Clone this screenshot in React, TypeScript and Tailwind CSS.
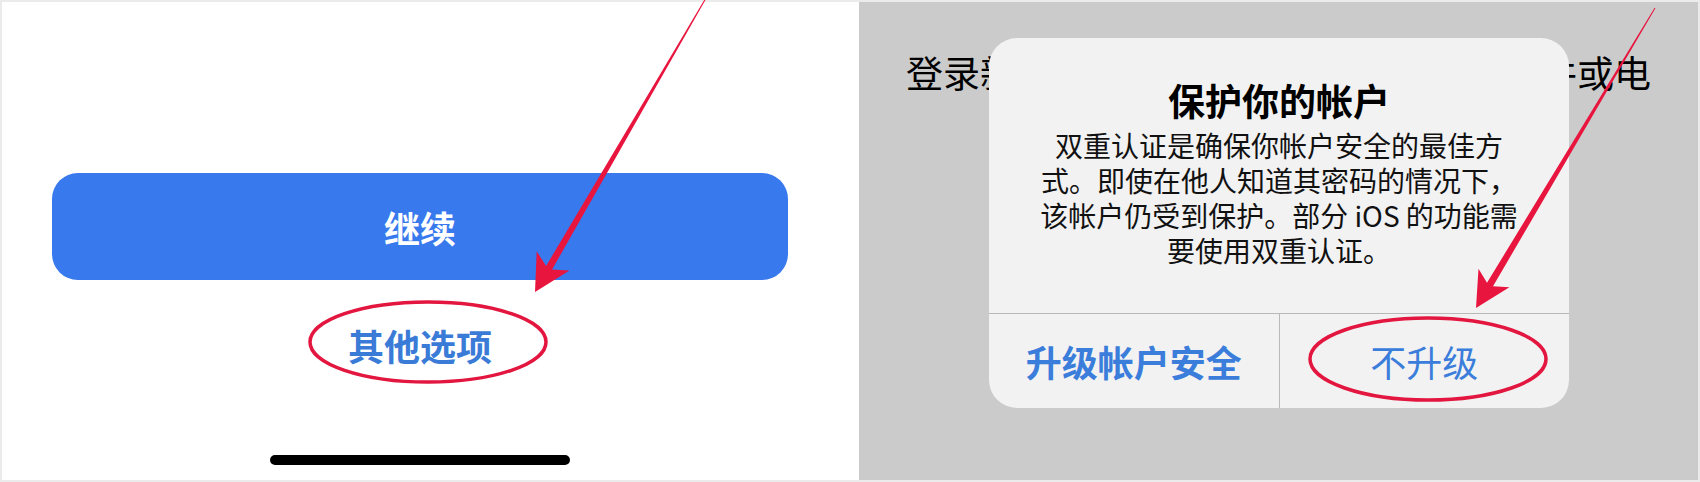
import React from "react";

const CJK = { fontFamily: '"Noto Sans CJK SC", "Noto Sans", sans-serif' };

// polygon for a tapered annotation arrow from (sx,sy) to tip (tx,ty)
function arrowPoints(
  sx: number,
  sy: number,
  tx: number,
  ty: number,
  headLen: number,
  headHalf: number,
  neckHalf: number,
  tailHalf: number
) {
  const dx = tx - sx;
  const dy = ty - sy;
  const len = Math.hypot(dx, dy);
  const ux = dx / len;
  const uy = dy / len;
  const nx = -uy;
  const ny = ux;
  const p = (along: number, side: number) => [
    tx - ux * along + nx * side,
    ty - uy * along + ny * side,
  ];
  const pts = [
    [sx + nx * tailHalf, sy + ny * tailHalf],
    p(headLen * 0.78, neckHalf),
    p(headLen, headHalf),
    [tx, ty],
    p(headLen, -headHalf),
    p(headLen * 0.78, -neckHalf),
    [sx - nx * tailHalf, sy - ny * tailHalf],
  ];
  return pts.map((q) => `${q[0].toFixed(1)},${q[1].toFixed(1)}`).join(" ");
}

export default function App() {
  return (
    <div
      className="relative flex w-[1700px] h-[482px] bg-[#ebebeb] p-[2px] overflow-hidden"
      style={CJK}
    >
      {/* Left: phone bottom */}
      <div className="w-[857px] h-full bg-white">
        <div className="flex flex-col items-center w-[736px] ml-[50px] pt-[171px]">
          <button className="w-full h-[107px] rounded-[26px] bg-[#3879ee] text-white text-[36px] font-bold leading-none">
            继续
          </button>
          <div className="mt-[47px] text-[36px] leading-[36px] font-bold text-[#3a7bd8]">
            其他选项
          </div>
          <div className="mt-[92px] w-[300px] h-[10px] rounded-full bg-black" />
        </div>
      </div>

      {/* Right: alert over the login screen */}
      <div className="relative flex-1 h-full bg-[#cbcbcb] overflow-hidden">
        <div className="flex justify-between w-[839px] pt-[52px] pl-[47px] pr-[47px] whitespace-nowrap text-[37px] leading-[37px] text-black">
          <span>登录新设</span>
          <span>邮件或电</span>
        </div>

        <div className="absolute left-[130px] top-[36px] w-[580px] h-[370px] rounded-[28px] bg-[#f2f2f2] flex flex-col overflow-hidden">
          <div className="h-[275px] flex flex-col items-center pt-[44px] text-black">
            <div className="text-[37px] leading-[37px] font-bold">保护你的帐户</div>
            <div className="mt-[9px] text-[28px] leading-[35px] text-center text-[#111]">
              双重认证是确保你帐户安全的最佳方
              <br />
              式。即使在他人知道其密码的情况下，
              <br />
              该帐户仍受到保护。部分 iOS 的功能需
              <br />
              要使用双重认证。
            </div>
          </div>
          <div className="flex flex-1 border-t border-[#b9b9b9]">
            <div className="flex-1 flex items-center justify-center text-[36px] font-bold text-[#3b7ddb]">
              升级帐户安全
            </div>
            <div className="flex-1 flex items-center justify-center border-l border-[#b9b9b9] text-[36px] text-[#3b7ddb]">
              不升级
            </div>
          </div>
        </div>
      </div>

      {/* red annotations */}
      <svg
        className="absolute inset-0 pointer-events-none"
        width="1700"
        height="482"
        viewBox="0 0 1700 482"
      >
        <ellipse cx="428" cy="342" rx="118" ry="40" fill="none" stroke="#e3163f" strokeWidth="3.5" />
        <ellipse cx="1428" cy="359" rx="118" ry="41" fill="none" stroke="#e3163f" strokeWidth="3.5" />
        <polygon points={arrowPoints(706, -2, 535, 292, 36, 19, 3.5, 0.5)} fill="#e8163f" />
        <polygon points={arrowPoints(1655, 8, 1476, 308, 35, 18, 3.5, 0.5)} fill="#e8163f" />
      </svg>
    </div>
  );
}
